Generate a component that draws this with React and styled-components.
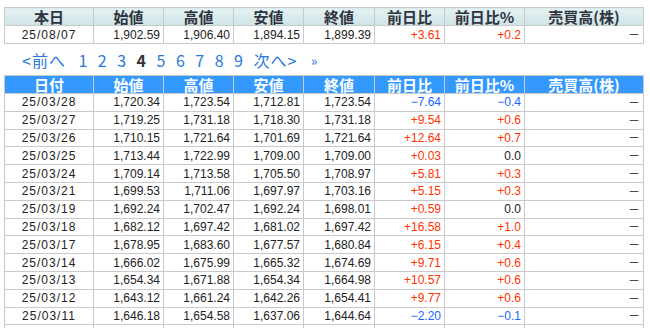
import styled, { createGlobalStyle } from 'styled-components';

const GlobalStyle = createGlobalStyle`
  body {
    margin: 0;
    background: #fff;
    font-family: 'Liberation Sans', Arial, sans-serif;
  }
`;

const HEADERS = ['始値', '高値', '安値', '終値', '前日比', '前日比%', '売買高(株)'];
const WIDTHS = [89, 70, 70, 70, 71, 70, 80, 119];

const today = ['25/08/07', '1,902.59', '1,906.40', '1,894.15', '1,899.39', '+3.61', '+0.2'];

const history = [
  ['25/03/28', '1,720.34', '1,723.54', '1,712.81', '1,723.54', '−7.64', '−0.4'],
  ['25/03/27', '1,719.25', '1,731.18', '1,718.30', '1,731.18', '+9.54', '+0.6'],
  ['25/03/26', '1,710.15', '1,721.64', '1,701.69', '1,721.64', '+12.64', '+0.7'],
  ['25/03/25', '1,713.44', '1,722.99', '1,709.00', '1,709.00', '+0.03', '0.0'],
  ['25/03/24', '1,709.14', '1,713.58', '1,705.50', '1,708.97', '+5.81', '+0.3'],
  ['25/03/21', '1,699.53', '1,711.06', '1,697.97', '1,703.16', '+5.15', '+0.3'],
  ['25/03/19', '1,692.24', '1,702.47', '1,692.24', '1,698.01', '+0.59', '0.0'],
  ['25/03/18', '1,682.12', '1,697.42', '1,681.02', '1,697.42', '+16.58', '+1.0'],
  ['25/03/17', '1,678.95', '1,683.60', '1,677.57', '1,680.84', '+6.15', '+0.4'],
  ['25/03/14', '1,666.02', '1,675.99', '1,665.32', '1,674.69', '+9.71', '+0.6'],
  ['25/03/13', '1,654.34', '1,671.88', '1,654.34', '1,664.98', '+10.57', '+0.6'],
  ['25/03/12', '1,643.12', '1,661.24', '1,642.26', '1,654.41', '+9.77', '+0.6'],
  ['25/03/11', '1,646.18', '1,654.58', '1,637.06', '1,644.64', '−2.20', '−0.1'],
  ['25/03/10', '1,657.10', '1,660.71', '1,646.84', '1,646.84', '−7.56', '−0.5'],
];

const PAGES = ['1', '2', '3', '4', '5', '6', '7', '8', '9'];

function toneOf(value) {
  if (value.startsWith('+')) return 'up';
  if (value.startsWith('−')) return 'down';
  return 'flat';
}

const Page = styled.div`
  padding: 7px 0 0 4px;
  width: 639px;
`;

const Table = styled.table`
  width: 639px;
  table-layout: fixed;
  border-collapse: collapse;
  border: 1px solid #c9c9c9;
`;

const HeadCell = styled.th`
  height: 17px;
  padding: 0;
  border: 1px solid #c9c9c9;
  font-family: 'Noto Sans CJK JP', sans-serif;
  font-size: 15px;
  font-weight: bold;
  line-height: 17px;
  text-align: center;
  color: ${(p) => (p.$variant === 'history' ? '#fff' : '#2f3340')};
  background: ${(p) =>
    p.$variant === 'history'
      ? '#3399ff'
      : 'linear-gradient(#e4f1f2, #cfe4e6)'};
`;

const Row = styled.tr`
  height: ${(p) => p.$height}px;
`;

const Cell = styled.td`
  padding: 0 3px 0 0;
  border: 1px solid #c9c9c9;
  font-size: 12px;
  line-height: 14px;
  white-space: nowrap;
  overflow: hidden;
  text-align: right;
  color: ${(p) =>
    p.$tone === 'up' ? '#ff3300' : p.$tone === 'down' ? '#1a66ff' : '#222'};
`;

const DateCell = styled(Cell)`
  padding: 0;
  text-align: center;
  letter-spacing: 1px;
`;

const Dash = styled.span`
  font-family: 'Noto Sans CJK JP', sans-serif;
  font-size: 12px;
  color: #222;
`;

const Pager = styled.nav`
  display: flex;
  align-items: center;
  gap: 10.5px;
  height: 31px;
  padding-left: 18px;
  font-family: 'Noto Sans CJK JP', sans-serif;
  font-size: 16px;
  line-height: 20px;
`;

const PageLink = styled.a`
  color: ${(p) => (p.$current ? '#333' : '#2a78dc')};
  font-weight: ${(p) => (p.$current ? 'bold' : 'normal')};
  letter-spacing: ${(p) => (p.$wide ? '1px' : '0')};
  margin-right: ${(p) => (p.$wide === 'prev' ? '2px' : '0')};
  text-decoration: none;
  cursor: pointer;
`;

const LastLink = styled(PageLink)`
  margin-left: 3px;
  font-size: 14px;
`;

function Columns() {
  return (
    <colgroup>
      {WIDTHS.map((w, i) => (
        <col key={i} style={{ width: w }} />
      ))}
    </colgroup>
  );
}

function DataRow({ values, height }) {
  return (
    <Row $height={height}>
      <DateCell>{values[0]}</DateCell>
      {values.slice(1, 5).map((v, i) => (
        <Cell key={i}>{v}</Cell>
      ))}
      <Cell $tone={toneOf(values[5])}>{values[5]}</Cell>
      <Cell $tone={toneOf(values[6])}>{values[6]}</Cell>
      <Cell>
        <Dash>－</Dash>
      </Cell>
    </Row>
  );
}

function HeadRow({ first, variant }) {
  return (
    <tr>
      <HeadCell $variant={variant}>{first}</HeadCell>
      {HEADERS.map((h) => (
        <HeadCell key={h} $variant={variant}>
          {h}
        </HeadCell>
      ))}
    </tr>
  );
}

export default function App() {
  return (
    <Page>
      <GlobalStyle />
      <Table>
        <Columns />
        <thead>
          <HeadRow first='本日' variant='today' />
        </thead>
        <tbody>
          <DataRow values={today} height={18} />
        </tbody>
      </Table>

      <Pager>
        <PageLink $wide='prev'>&lt;前へ</PageLink>
        {PAGES.map((n) => (
          <PageLink key={n} $current={n === '4'}>
            {n}
          </PageLink>
        ))}
        <PageLink $wide='next'>次へ&gt;</PageLink>
        <LastLink>»</LastLink>
      </Pager>

      <Table>
        <Columns />
        <thead>
          <HeadRow first='日付' variant='history' />
        </thead>
        <tbody>
          {history.map((r) => (
            <DataRow key={r[0]} values={r} height={17.8} />
          ))}
        </tbody>
      </Table>
    </Page>
  );
}
